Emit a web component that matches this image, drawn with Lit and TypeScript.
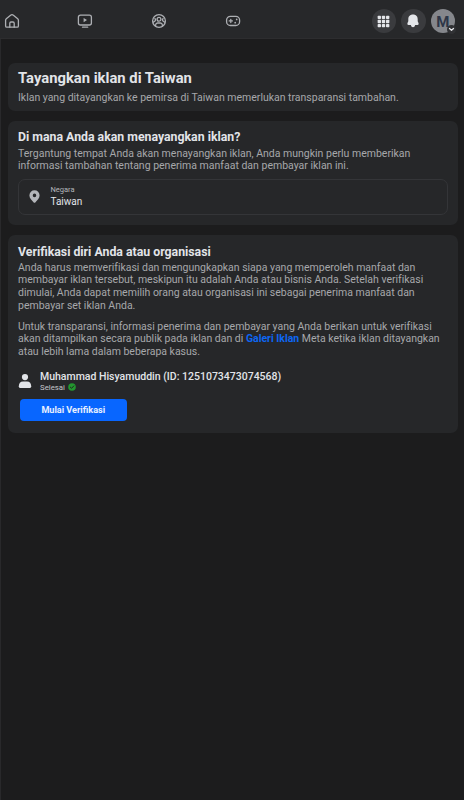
import { css, html, svg, LitElement } from 'lit'
import { customElement, property } from 'lit/decorators.js'


//Icons, all of them drawn with currentColor
const homeIcon = svg`
   <path d="M.6 6.2 Q.6 5.3 1.3 4.7 L5.6 1.2 Q7 .1 8.4 1.2 L12.7 4.7 Q13.4 5.3 13.4 6.2 V12 Q13.4 13.2 12.2 13.2 H9.2 V9.2 Q9.2 8 8 8 H6 Q4.8 8 4.8 9.2 V13.2 H1.8 Q.6 13.2 .6 12 Z"/>
   <path d="M4.8 13.2 H9.2"/>`

const watchIcon = svg`
   <rect x=".4" y="1.2" width="13" height="9.8" rx="2"/>
   <path d="M4.5 13.2 H9.7"/>
   <path class="solid" d="M5.6 4 L9 6.1 L5.6 8.2 Z"/>`

const groupsIcon = svg`
   <circle cx="7" cy="7" r="6.4"/>
   <circle cx="7" cy="5.3" r="1.9"/>
   <path d="M3.6 12 V11 Q3.8 9 5.6 9 H8.4 Q10.2 9 10.4 11 V12"/>
   <path d="M2.9 4.6 Q4 5.4 3.3 6.7 L1.3 8.2 M11.1 4.6 Q10 5.4 10.7 6.7 L12.7 8.2"/>`

const gamesIcon = svg`
   <rect x=".6" y="2.3" width="13" height="9.2" rx="3.8"/>
   <path d="M3.2 6.9 H6.4 M4.8 5.3 V8.5"/>
   <path d="M9.2 8.6 V8.7 M10.7 5.4 V5.5" stroke-width="1.7"/>`

const bellIcon = svg`
   <path class="solid" d="M7 .6 C3.8 .6 2.3 2.8 2.3 5.2 V7.2 L1.4 9.3 Q1 11 2.4 11 H11.6 Q13 11 12.6 9.3 L11.7 7.2 V5.2 C11.7 2.8 10.2 .6 7 .6 Z"/>
   <path class="solid" d="M4.8 11 H9.2 Q8.7 13.2 7 13.2 Q5.3 13.2 4.8 11 Z"/>`

const dots = [2.5, 7, 11.5]
const gridIcon = dots.map(y => dots.map(x => svg`
   <rect class="solid" x=${x - 1.8} y=${y - 1.8} width="3.6" height="3.6" rx=".8"/>`))

const pinIcon = svg`
   <path class="solid" fill-rule="evenodd" d="M7 .3 A5.5 5.5 0 0 0 1.5 5.8 C1.5 8.9 4.3 10.7 5.9 13.1 Q7 14.3 8.1 13.1 C9.7 10.7 12.5 8.9 12.5 5.8 A5.5 5.5 0 0 0 7 .3 Z M7 3.9 A1.9 1.9 0 1 1 7 7.7 A1.9 1.9 0 1 1 7 3.9 Z"/>`

const personIcon = svg`
   <circle class="solid" cx="7" cy="3.1" r="3.1"/>
   <path class="solid" d="M.8 12.2 Q.9 7.4 5 7.4 H9 Q13.1 7.4 13.2 12.2 Q13.2 13.9 12 13.9 H2 Q.8 13.9 .8 12.2 Z"/>`

const icon = (shape: unknown, size = 14) => html`
   <svg class="icon" width=${size} height=${size} viewBox="0 0 14 14">${shape}</svg>`

const genLines = (lines: unknown[]) => lines.map(line => html`<span class="line">${line}</span>`)

const sharedStyles = css`
   * {
      box-sizing: border-box;
   }

   .icon {
      display: block;
      flex: none;
      fill: none;
      stroke: currentColor;
      stroke-width: 1.3;
      stroke-linecap: round;
      stroke-linejoin: round;
      overflow: visible;
   }

   .icon .solid {
      fill: currentColor;
      stroke: none;
   }
`


@customElement('top-bar')
export class TopBar extends LitElement {
   @property()
   initial = 'M'

   render() {
      return html`
         <nav class="tabs">
            ${[homeIcon, watchIcon, groupsIcon, gamesIcon].map(shape => html`<a class="tab">${icon(shape)}</a>`)}
         </nav>
         <div class="actions">
            <button class="round">${icon(gridIcon, 13)}</button>
            <button class="round">${icon(bellIcon, 14)}</button>
            <button class="round avatar">
               ${this.initial}
               <span class="badge">
                  <svg class="icon chevron" width="5" height="3" viewBox="0 0 5 3"><path d="M.5 .5 L2.5 2.3 L4.5 .5"/></svg>
               </span>
            </button>
         </div>`
   }

   static styles = [sharedStyles, css`
      :host {
         display: flex;
         justify-content: space-between;
         height: 39px;
         padding: 0 9px 0 4.7px;
         background: #27282a;
         border-bottom: 1px solid #2d2d2f;
      }

      .tabs {
         display: flex;
         align-items: center;
         gap: 59.75px;
         padding-top: 3px;
         color: #adafb3;
      }

      .actions {
         display: flex;
         align-items: center;
         gap: 5px;
         padding-top: 4px;
      }

      .round {
         display: grid;
         place-items: center;
         position: relative;
         width: 24.5px;
         height: 24.5px;
         padding: 0;
         border: 0;
         border-radius: 50%;
         background: #3a3b3e;
         color: #e4e6ea;
      }

      .avatar {
         padding-top: 1px;
         background: #85878c;
         color: #2d3648;
         font: 700 15px Roboto, sans-serif;
      }

      .badge {
         display: grid;
         place-items: center;
         position: absolute;
         right: -1px;
         bottom: -1px;
         width: 9px;
         height: 9px;
         border-radius: 50%;
         background: #303134;
         color: #e4e6ea;
      }
   `]
}


@customElement('app-root')
export class AppRoot extends LitElement {
   render() {
      return html`
         <top-bar></top-bar>
         <main class="page">
            <section class="card intro">
               <h1 class="title">Tayangkan iklan di Taiwan</h1>
               <p class="text">${genLines(['Iklan yang ditayangkan ke pemirsa di Taiwan memerlukan transparansi tambahan.'])}</p>
            </section>

            <section class="card place">
               <h2 class="heading">Di mana Anda akan menayangkan iklan?</h2>
               <p class="text">${genLines([
                  'Tergantung tempat Anda akan menayangkan iklan, Anda mungkin perlu memberikan',
                  'informasi tambahan tentang penerima manfaat dan pembayar iklan ini.',
               ])}</p>
               <div class="field">
                  ${icon(pinIcon, 13)}
                  <div class="field-text">
                     <span class="label">Negara</span>
                     <span class="value">Taiwan</span>
                  </div>
               </div>
            </section>

            <section class="card verify">
               <h2 class="heading">Verifikasi diri Anda atau organisasi</h2>
               <p class="text">${genLines([
                  'Anda harus memverifikasi dan mengungkapkan siapa yang memperoleh manfaat dan',
                  'membayar iklan tersebut, meskipun itu adalah Anda atau bisnis Anda. Setelah verifikasi',
                  'dimulai, Anda dapat memilih orang atau organisasi ini sebagai penerima manfaat dan',
                  'pembayar set iklan Anda.',
               ])}</p>
               <p class="text second">${genLines([
                  'Untuk transparansi, informasi penerima dan pembayar yang Anda berikan untuk verifikasi',
                  html`akan ditampilkan secara publik pada iklan dan di <a class="link">Galeri Iklan</a> Meta ketika iklan ditayangkan`,
                  'atau lebih lama dalam beberapa kasus.',
               ])}</p>
               <div class="person">
                  ${icon(personIcon, 14)}
                  <div>
                     <div class="name">Muhammad Hisyamuddin (ID: 1251073473074568)</div>
                     <div class="status">
                        Selesai
                        <svg class="icon check" width="8" height="8" viewBox="0 0 8 8">
                           <circle class="solid" cx="4" cy="4" r="3.8"/>
                           <path class="tick" d="M2.3 4.1 L3.6 5.3 L5.8 2.9"/>
                        </svg>
                     </div>
                  </div>
               </div>
               <button class="start">Mulai Verifikasi</button>
            </section>
         </main>`
   }

   static styles = [sharedStyles, css`
      :host {
         display: flex;
         flex-direction: column;
         height: 800px;
         overflow: hidden;
         background: #1c1c1d;
         color: #e2e4e8;
         font-family: Roboto, sans-serif;
      }

      .page {
         flex: 1;
         display: flex;
         flex-direction: column;
         gap: 10px;
         padding: 24px 6px 0 7px;
         border-left: 1px solid #29292b;
      }

      .card {
         padding: 0 10px;
         border-radius: 7px;
         background: #262729;
         white-space: nowrap;
      }

      .intro {
         height: 47.5px;
         padding-top: 6px;
      }

      .place {
         height: 104px;
         padding-top: 8px;
      }

      .verify {
         height: 198px;
         padding-top: 9px;
      }

      .title,
      .heading,
      .text {
         margin: 0;
      }

      .title {
         font-size: 14.8px;
         line-height: 18px;
         font-weight: 700;
      }

      .heading {
         font-size: 12.3px;
         line-height: 16px;
         font-weight: 700;
      }

      .text {
         margin-top: 2px;
         color: #a6a8ab;
         font-size: 10.5px;
         line-height: 12.5px;
      }

      .intro .text {
         margin-top: 4.5px;
         letter-spacing: -0.01px;
      }

      .place .text {
         margin-top: 3.5px;
         line-height: 12.2px;
      }

      .verify .text {
         margin-top: 2.3px;
         line-height: 12.6px;
         letter-spacing: -0.01px;
      }

      .verify .text.second {
         margin-top: 8.4px;
         line-height: 12.8px;
      }

      .line {
         display: block;
      }

      .link {
         color: #0d66f2;
         font-weight: 700;
      }

      .field {
         display: flex;
         align-items: center;
         gap: 9.5px;
         height: 36px;
         margin-top: 6.1px;
         padding-left: 9px;
         border: 1px solid #343538;
         border-radius: 7px;
         color: #b4b6ba;
      }

      .label,
      .value {
         display: block;
      }

      .label {
         font-size: 7.5px;
         line-height: 10px;
      }

      .value {
         color: #e2e4e8;
         font-size: 10px;
         line-height: 13px;
      }

      .person {
         display: flex;
         align-items: center;
         gap: 8px;
         margin-top: 11px;
      }

      .name {
         font-size: 10.5px;
         line-height: 13px;
         font-weight: 500;
      }

      .status {
         display: flex;
         align-items: center;
         gap: 3px;
         color: #c4c6c9;
         font-size: 7.8px;
         line-height: 9px;
      }

      .check {
         color: #23962f;
      }

      .tick {
         stroke: #1e2a20;
         stroke-width: 1;
      }

      .start {
         display: block;
         width: 107.5px;
         height: 22px;
         margin: 7px 0 0 1.5px;
         padding: 0;
         border: 0;
         border-radius: 4px;
         background: #0866ff;
         color: #e8f0ff;
         font: 700 9.1px Roboto, sans-serif;
      }
   `]
}


declare global {
   interface HTMLElementTagNameMap {
      'app-root': AppRoot
      'top-bar': TopBar
   }
}
